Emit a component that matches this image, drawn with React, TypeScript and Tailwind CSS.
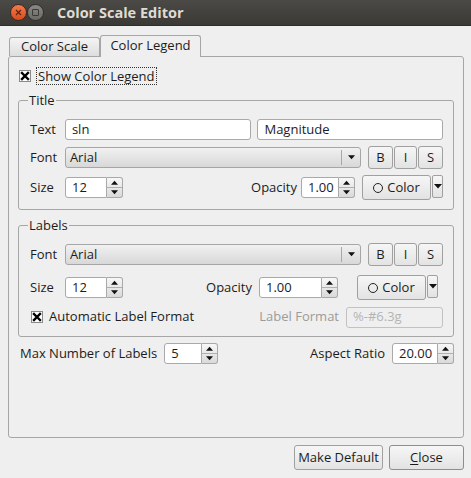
import React from "react";

const font = { fontFamily: '"Open Sans", "DejaVu Sans", sans-serif' };

function Tri({ up = false, size = 7 }: { up?: boolean; size?: number }) {
  return (
    <svg width={size} height={Math.ceil(size / 2) + 1} viewBox="0 0 8 5">
      {up ? <path d="M0 5 L4 0.5 L8 5 Z" fill="#111" /> : <path d="M0 0 L8 0 L4 4.5 Z" fill="#111" />}
    </svg>
  );
}

function CheckBox() {
  return (
    <svg width="12" height="12" viewBox="0 0 12 12">
      <rect x="0.5" y="0.5" width="11" height="11" fill="#fff" stroke="#8a8a8a" />
      <path d="M3 3 L9 9 M9 3 L3 9" stroke="#000" strokeWidth="2.4" strokeLinecap="square" />
    </svg>
  );
}

function Spin({ value, w }: { value: string; w: string }) {
  return (
    <div className={`flex h-[21px] ${w}`}>
      <div className="flex-1 flex items-center bg-white border border-[#a9a9a9] rounded-l-[3px] pl-[6px] text-[13px]">
        {value}
      </div>
      <div className="w-[16px] flex flex-col border border-l-0 border-[#a9a9a9] rounded-r-[3px] bg-gradient-to-b from-[#f7f7f7] to-[#dadada]">
        <div className="flex-1 flex items-center justify-center border-b border-[#b0b0b0]">
          <Tri up />
        </div>
        <div className="flex-1 flex items-center justify-center">
          <Tri />
        </div>
      </div>
    </div>
  );
}

function Combo() {
  return (
    <div className="w-[297px] h-[21px] flex items-center border border-[#a6a6a6] rounded-[3px] bg-gradient-to-b from-[#f1f1f1] to-[#d8d8d8] pl-[4px] text-[13px]">
      Arial
      <div className="ml-auto w-px h-[15px] bg-[#a8a8a8]" />
      <div className="w-[18px] flex justify-center">
        <Tri />
      </div>
    </div>
  );
}

function Btn({ children, w, h = "h-[23px]" }: { children: React.ReactNode; w: string; h?: string }) {
  return (
    <div
      className={`${w} ${h} flex items-center justify-center border border-[#a0a0a0] rounded-[3px] bg-gradient-to-b from-[#f6f6f6] to-[#e3e3e3] text-[13px]`}
    >
      {children}
    </div>
  );
}

function BIS() {
  return (
    <div className="flex gap-[1px]">
      <Btn w="w-[25px]">B</Btn>
      <Btn w="w-[23px]">I</Btn>
      <Btn w="w-[25px]">S</Btn>
    </div>
  );
}

function ColorBtn() {
  return (
    <div className="flex h-[25px] gap-[1px]">
      <Btn w="w-[69px]" h="h-[25px]">
        <span className="inline-block w-[10px] h-[10px] rounded-full border border-[#222] mr-[4px]" />
        Color
      </Btn>
      <div className="w-[11px] h-[23px] flex items-center justify-center border border-[#a0a0a0] rounded-[2px] bg-gradient-to-b from-[#f6f6f6] to-[#e3e3e3]">
        <Tri size={8} />
      </div>
    </div>
  );
}

function Group({ title, children, cls }: { title: string; children: React.ReactNode; cls: string }) {
  return (
    <div className={`relative ml-[9px] w-[436px] border border-[#a6a6a6] rounded-[3px] ${cls}`}>
      <span className="absolute left-[9px] -top-[10px] px-[1px] bg-[#efefef] text-[13px] leading-[18px]">{title}</span>
      {children}
    </div>
  );
}

export default function App() {
  return (
    <div className="w-[471px] h-[478px] bg-[#efefef] text-[#1c1c1c] overflow-hidden" style={font}>
      {/* window title bar */}
      <div className="h-[26px] flex items-center bg-gradient-to-b from-[#4b4a46] to-[#3a3935] border-b border-[#2e2d2a]">
        <div className="ml-[10px] w-[17px] h-[17px] rounded-full bg-gradient-to-b from-[#f47a4a] to-[#d9491c] border border-[#3a2a22] flex items-center justify-center">
          <svg width="7" height="7" viewBox="0 0 7 7">
            <path d="M1 1 L6 6 M6 1 L1 6" stroke="#5a2410" strokeWidth="1.2" />
          </svg>
        </div>
        <div className="w-[17px] h-[17px] rounded-full bg-gradient-to-b from-[#8a8984] to-[#6a6965] border border-[#2f2e2b] flex items-center justify-center">
          <div className="w-[7px] h-[7px] border border-[#3a3936] rounded-[1px]" />
        </div>
        <span className="ml-[13px] text-[14.5px] font-bold text-[#dfdbd2]">Color Scale Editor</span>
      </div>

      <div className="px-[8px]">
        {/* tabs */}
        <div className="mt-[9px] h-[21px] flex items-end">
          <div className="ml-[1px] w-[91px] h-[19px] flex items-center justify-center border border-b-0 border-[#a6a6a6] rounded-t-[3px] bg-gradient-to-b from-[#f4f4f4] to-[#dedede] text-[13px]">
            Color Scale
          </div>
          <div className="relative z-10 -mb-px w-[101px] h-[22px] flex items-center justify-center border border-b-0 border-[#a6a6a6] rounded-t-[3px] bg-[#efefef] text-[13px] pb-[1px]">
            Color Legend
          </div>
        </div>

        {/* pane */}
        <div className="w-[456px] h-[382px] border border-[#a6a6a6] rounded-[3px]">
          <div className="mt-[10px] ml-[10px] flex items-center h-[18px]">
            <CheckBox />
            <span className="ml-[5px] px-[1px] border border-dotted border-[#333] text-[13px] leading-[16px]">Show Color Legend</span>
          </div>

          <Group title="Title" cls="mt-[15px] pt-[18px] pb-[9px] pl-[11px] pr-[10px]">
            <div className="flex items-center h-[21px] text-[13px]">
              <span className="w-[35px]">Text</span>
              <div className="w-[187px] h-[21px] flex items-center bg-white border border-[#a9a9a9] rounded-[3px] pl-[6px]">sln</div>
              <div className="ml-[6px] w-[186px] h-[21px] flex items-center bg-white border border-[#a9a9a9] rounded-[3px] pl-[6px]">Magnitude</div>
            </div>
            <div className="mt-[6px] flex items-center h-[23px] text-[13px]">
              <span className="w-[35px]">Font</span>
              <Combo />
              <div className="ml-[7px]">
                <BIS />
              </div>
            </div>
            <div className="mt-[6px] flex items-center h-[25px] text-[13px]">
              <span className="w-[35px]">Size</span>
              <Spin value="12" w="w-[58px]" />
              <span className="ml-auto">Opacity</span>
              <div className="ml-[4px]">
                <Spin value="1.00" w="w-[54px]" />
              </div>
              <div className="ml-[7px]">
                <ColorBtn />
              </div>
            </div>
          </Group>

          <Group title="Labels" cls="mt-[15px] pt-[17px] pb-[8px] pl-[11px] pr-[10px]">
            <div className="flex items-center h-[23px] text-[13px]">
              <span className="w-[35px]">Font</span>
              <Combo />
              <div className="ml-[7px]">
                <BIS />
              </div>
            </div>
            <div className="mt-[9px] flex items-center h-[25px] text-[13px]">
              <span className="w-[35px]">Size</span>
              <Spin value="12" w="w-[58px]" />
              <span className="ml-auto">Opacity</span>
              <div className="ml-[7px]">
                <Spin value="1.00" w="w-[79px]" />
              </div>
              <div className="ml-[19px]">
                <ColorBtn />
              </div>
              <div className="w-[5px]" />
            </div>
            <div className="mt-[6px] flex items-center h-[22px] text-[13px]">
              <div className="ml-[1px]">
                <CheckBox />
              </div>
              <span className="ml-[6px]">Automatic Label Format</span>
              <span className="ml-auto text-[#9b9b9b]">Label Format</span>
              <div className="ml-[7px] w-[97px] h-[21px] flex items-center border border-[#c2c2c2] rounded-[3px] pl-[6px] text-[#b4b4b4]">
                %-#6.3g
              </div>
            </div>
          </Group>

          <div className="mt-[6px] pl-[11px] pr-[9px] flex items-center h-[21px] text-[13px]">
            <span>Max Number of Labels</span>
            <div className="ml-[7px]">
              <Spin value="5" w="w-[54px]" />
            </div>
            <span className="ml-auto">Aspect Ratio</span>
            <div className="ml-[7px]">
              <Spin value="20.00" w="w-[62px]" />
            </div>
          </div>
        </div>

        {/* bottom buttons */}
        <div className="mt-[7px] flex justify-end gap-[6px]">
          <Btn w="w-[89px]" h="h-[25px]">Make Default</Btn>
          <div className="w-[75px] h-[25px] flex items-center justify-center border border-[#8e8e8e] rounded-[3px] bg-gradient-to-b from-[#f6f6f6] to-[#e3e3e3] text-[13px] -mr-px">
            <span className="underline underline-offset-2">C</span>lose
          </div>
        </div>
      </div>
    </div>
  );
}
